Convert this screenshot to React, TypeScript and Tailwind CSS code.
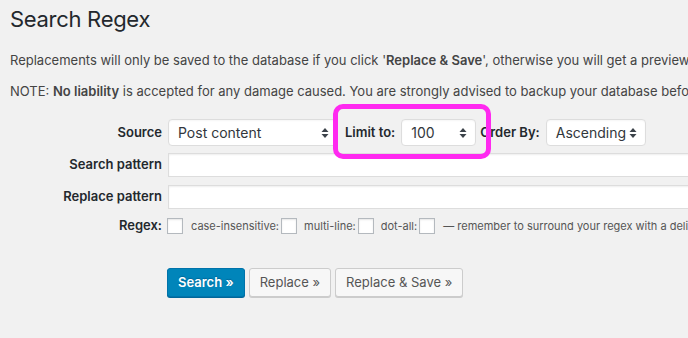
import React from "react";

function Arrows() {
  return (
    <svg width="8" height="12" viewBox="0 0 8 12" className="shrink-0">
      <path d="M4 1 L7.5 5 L0.5 5 Z" fill="#3c434a" />
      <path d="M4 11 L7.5 7 L0.5 7 Z" fill="#3c434a" />
    </svg>
  );
}

function Select({ value, w }: { value: string; w: string }) {
  return (
    <div
      className={`${w} shrink-0 h-[27px] bg-white border border-[#ddd] rounded-[4px] flex items-center justify-between pl-[9px] pr-[8px] text-[14px] text-[#32373c] shadow-[inset_0_1px_2px_rgba(0,0,0,0.04)]`}
    >
      <span>{value}</span>
      <Arrows />
    </div>
  );
}

function Box() {
  return (
    <span className="inline-block shrink-0 w-[16px] h-[16px] bg-white border border-[#b4b9be] shadow-[inset_0_1px_2px_rgba(0,0,0,0.1)] align-middle" />
  );
}

export default function App() {
  return (
    <div
      className="w-[688px] h-[338px] bg-[#f1f1f1] overflow-hidden text-[#444] text-[13px]"
      style={{ fontFamily: "Inter, 'Liberation Sans', sans-serif" }}
    >
      <div className="pl-[10px] pt-[5px]">
        <h1 className="text-[22px] leading-[29px] tracking-[-0.3px] text-[#23282d] font-normal">Search Regex</h1>
        <p className="mt-[16px] leading-[20px] whitespace-nowrap">
          Replacements will only be saved to the database if you click '<b className="font-semibold">Replace &amp; Save</b>', otherwise you will get a preview of the results.
        </p>
        <p className="mt-[11px] leading-[20px] whitespace-nowrap">
          NOTE: <b className="font-semibold">No liability</b> is accepted for any damage caused. You are strongly advised to backup your database before making any changes.
        </p>
      </div>

      <div className="mt-[18px] flex flex-col">
        <div className="flex items-center h-[27px]">
          <div className="w-[162px] shrink-0 text-right font-semibold text-[#23282d]">Source</div>
          <div className="ml-[6px] flex items-center shrink-0">
            <Select value="Post content" w="w-[170px]" />
            <span className="relative ml-[7px] flex items-center">
              <span className="font-semibold text-[#23282d]">Limit to:</span>
              <span className="ml-[6px]">
                <Select value="100" w="w-[75px]" />
              </span>
              <span className="absolute left-[-12px] right-[-15px] top-[-15px] bottom-[-13px] border-[5px] border-[#ff29f0] rounded-[10px]" />
            </span>
            <span className="ml-[4px] font-semibold text-[#23282d]">Order By:</span>
            <span className="ml-[6px]">
              <Select value="Ascending" w="w-[100px]" />
            </span>
          </div>
        </div>

        <div className="flex items-center mt-[7px] h-[24px]">
          <div className="w-[162px] shrink-0 text-right font-semibold text-[#23282d]">Search pattern</div>
          <div className="ml-[6px] shrink-0 w-[560px] h-[24px] bg-white border border-[#ddd] shadow-[inset_0_1px_2px_rgba(0,0,0,0.07)]" />
        </div>

        <div className="flex items-center mt-[8px] h-[24px]">
          <div className="w-[162px] shrink-0 text-right font-semibold text-[#23282d]">Replace pattern</div>
          <div className="ml-[6px] shrink-0 w-[560px] h-[24px] bg-white border border-[#ddd] shadow-[inset_0_1px_2px_rgba(0,0,0,0.07)]" />
        </div>

        <div className="flex items-center mt-[9px] h-[16px] whitespace-nowrap">
          <div className="w-[162px] shrink-0 text-right font-semibold text-[#23282d]">Regex:</div>
          <div className="ml-[5px] shrink-0 flex items-center text-[11px] text-[#555]">
            <Box />
            <span className="ml-[8px]">case-insensitive:</span>
            <span className="ml-[2px] flex"><Box /></span>
            <span className="ml-[7px]">multi-line:</span>
            <span className="ml-[2px] flex"><Box /></span>
            <span className="ml-[7px]">dot-all:</span>
            <span className="ml-[2px] flex"><Box /></span>
            <span className="ml-[8px]">— remember to surround your regex with a delimiter!</span>
          </div>
        </div>

        <div className="flex items-center mt-[34px] ml-[167px] gap-[4px]">
          <button className="h-[29px] px-[10px] rounded-[3px] bg-[#0085ba] border border-[#0073aa] shadow-[0_1px_0_#006799] text-white font-semibold text-[13px] [text-shadow:0_-1px_1px_#006799]">
            Search »
          </button>
          <button className="h-[29px] px-[10px] rounded-[3px] bg-[#f7f7f7] border border-[#ccc] shadow-[0_1px_0_#ccc] text-[#555] text-[13px]">
            Replace »
          </button>
          <button className="h-[29px] px-[10px] rounded-[3px] bg-[#f7f7f7] border border-[#ccc] shadow-[0_1px_0_#ccc] text-[#555] text-[13px]">
            Replace &amp; Save »
          </button>
        </div>
      </div>
    </div>
  );
}
